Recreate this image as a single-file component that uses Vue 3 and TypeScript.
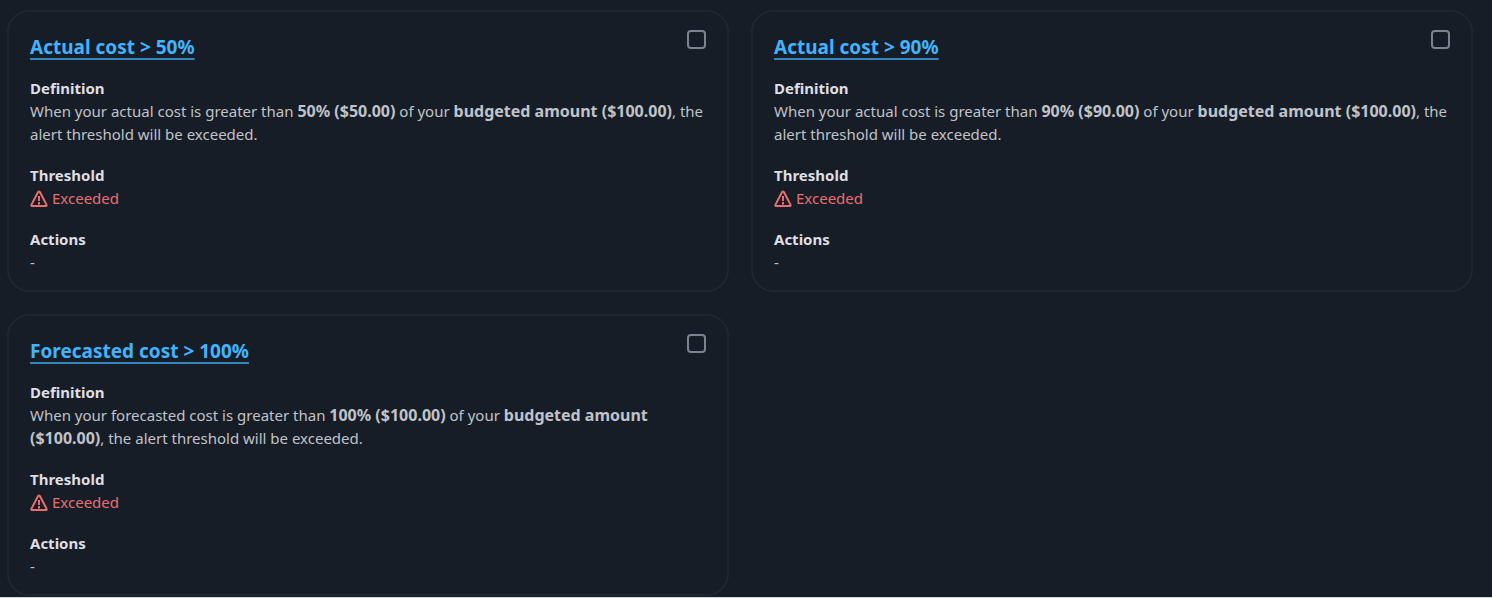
<script setup lang="ts">
interface Part {
  text: string
  strong?: boolean
}

interface Alert {
  id: string
  title: string
  definition: Part[]
  status: string
  actions: string
}

function define(kind: string, threshold: string): Part[] {
  return [
    { text: `When your ${kind} cost is greater than ` },
    { text: threshold, strong: true },
    { text: ' of your ' },
    { text: 'budgeted amount ($100.00)', strong: true },
    { text: ', the alert threshold will be exceeded.' },
  ]
}

const alerts: Alert[] = [
  { id: 'actual-50', title: 'Actual cost > 50%', definition: define('actual', '50% ($50.00)'), status: 'Exceeded', actions: '-' },
  { id: 'actual-90', title: 'Actual cost > 90%', definition: define('actual', '90% ($90.00)'), status: 'Exceeded', actions: '-' },
  { id: 'forecast-100', title: 'Forecasted cost > 100%', definition: define('forecasted', '100% ($100.00)'), status: 'Exceeded', actions: '-' },
]
</script>

<template>
  <main class="page">
    <ul class="cards">
      <li v-for="alert in alerts" :key="alert.id" class="card">
        <div class="head">
          <h2 class="title"><a :id="alert.id" class="link" href="#">{{ alert.title }}</a></h2>
          <input class="check" type="checkbox" :aria-labelledby="alert.id" />
        </div>
        <dl class="details">
          <div>
            <dt>Definition</dt>
            <dd>
              <template v-for="(part, i) in alert.definition" :key="i"><strong v-if="part.strong">{{ part.text }}</strong><template v-else>{{ part.text }}</template></template>
            </dd>
          </div>
          <div>
            <dt>Threshold</dt>
            <dd class="status">
              <svg class="icon" viewBox="0 0 18 18" aria-hidden="true">
                <path d="M8.1 2 1.5 14.6Q1 16 2.3 16H15.7Q17 16 16.5 14.6L9.9 2Q9 .8 8.1 2Z" />
                <path d="M9 6v5M9 12v2.4" />
              </svg>
              <span>{{ alert.status }}</span>
            </dd>
          </div>
          <div>
            <dt>Actions</dt>
            <dd>{{ alert.actions }}</dd>
          </div>
        </dl>
      </li>
    </ul>
  </main>
</template>

<style>
body {
  margin: 0;
  background: #161d26;
}
</style>

<style scoped>
.page {
  box-sizing: border-box;
  min-height: 100vh;
  padding: 10px 19px 0 7px;
  border-bottom: 1px solid #d5d8db;
  background: #161d26;
  color: #c0c3c9;
  font-family: "Noto Sans", "Open Sans", sans-serif;
  font-size: 15px;
  line-height: 23px;
}

.cards {
  display: grid;
  grid-template-columns: repeat(2, minmax(0, 1fr));
  gap: 22px;
  margin: 0;
  padding: 0;
  list-style: none;
}

.card {
  padding: 18px 21px 16px;
  border: 2px solid #1f2630;
  border-radius: 22px;
}

.head {
  display: flex;
  justify-content: space-between;
  align-items: flex-start;
  margin-bottom: 16px;
}

.title {
  margin: 3px 0 0;
  font-size: 19px;
  line-height: 28px;
  font-weight: 700;
}

.link {
  color: #42b4ff;
  text-decoration: underline;
  text-decoration-color: #3487bd;
  text-decoration-thickness: 2px;
  text-underline-offset: 4px;
}

.check {
  appearance: none;
  box-sizing: border-box;
  width: 19px;
  height: 19px;
  margin: 0;
  border: 2px solid #7d8490;
  border-radius: 4px;
}

.check:checked {
  border-color: #42b4ff;
  background: #42b4ff;
}

.details {
  display: flex;
  flex-direction: column;
  gap: 18px;
  margin: 0;
}

dt {
  color: #dedee3;
  font-weight: 700;
}

dd {
  margin: 0;
}

strong {
  font-size: 16px;
  line-height: 1;
  font-weight: 700;
}

.status {
  display: flex;
  align-items: center;
  gap: 4px;
  color: #e96f6f;
}

.icon {
  width: 18px;
  height: 18px;
  fill: none;
  stroke: currentColor;
  stroke-width: 2;
  stroke-linejoin: round;
}
</style>
